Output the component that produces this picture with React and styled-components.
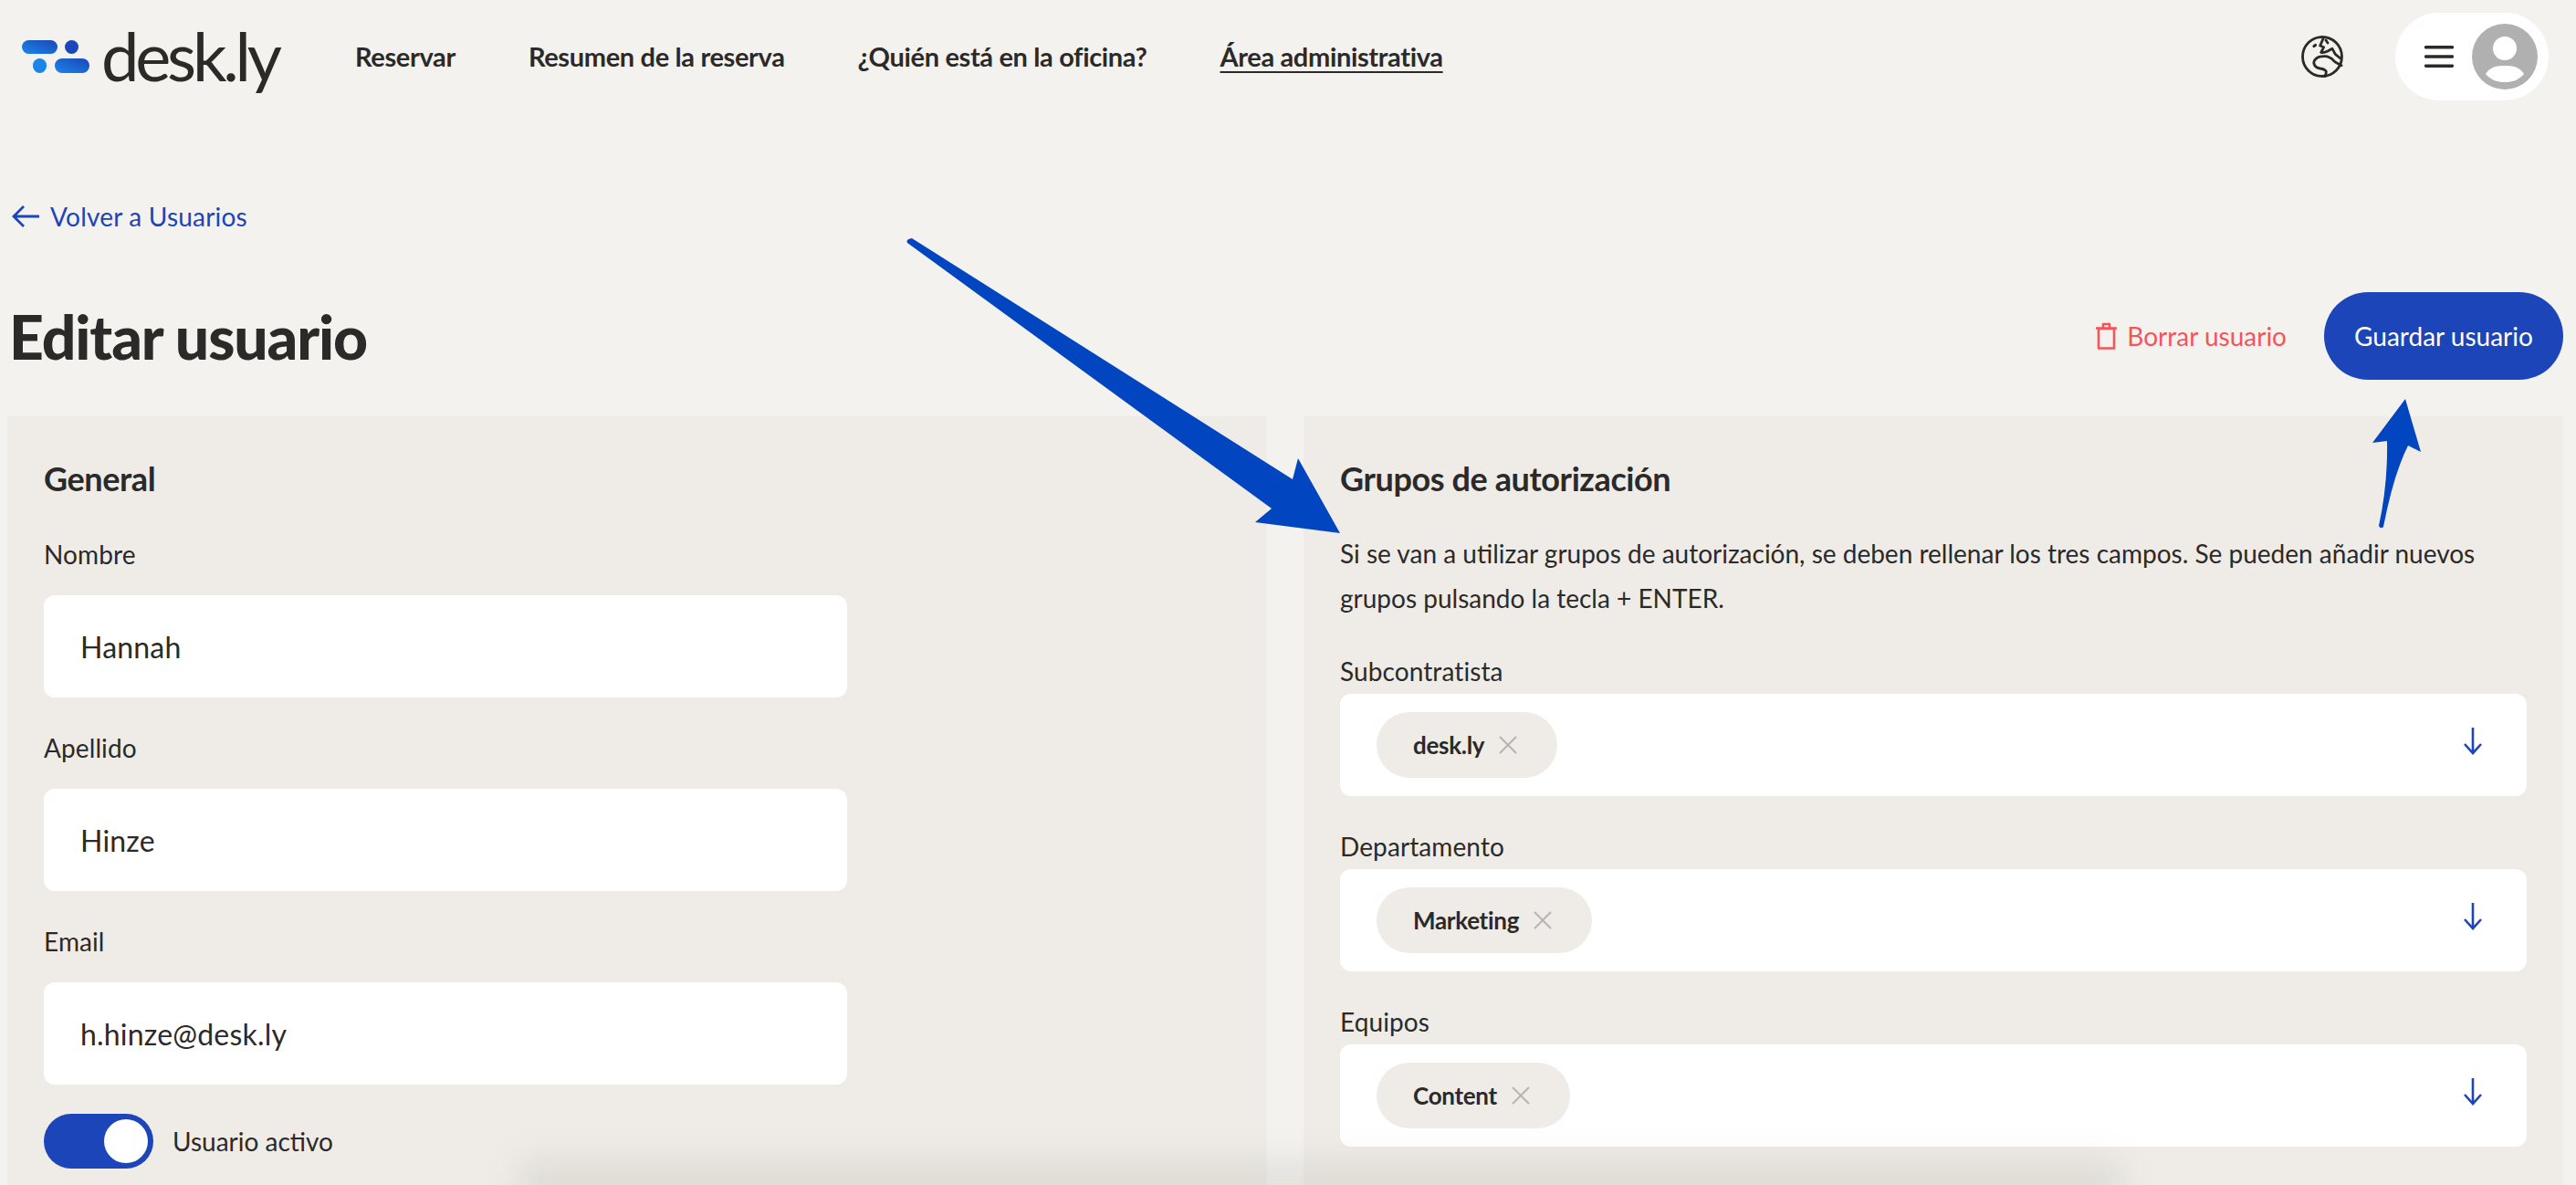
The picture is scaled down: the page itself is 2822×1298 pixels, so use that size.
import React from 'react';
import styled, { createGlobalStyle } from 'styled-components';

const ink = '#2b2a29';
const blue = '#1b45b8';

const GlobalStyle = createGlobalStyle`
  html, body {
    margin: 0;
    height: 100%;
    overflow: hidden;
    background: #f4f2ee;
  }
  body {
    font-family: Lato, "Liberation Sans", sans-serif;
    color: ${ink};
  }
`;

const Page = styled.div`
  position: relative;
  width: 2822px;
  height: 1298px;
  overflow: hidden;
`;

const Header = styled.header`
  display: flex;
  align-items: center;
  height: 124px;
  padding: 0 30px 0 24px;
  box-sizing: border-box;
`;

const Logo = styled.div`
  display: flex;
  align-items: center;
  gap: 13px;
  width: 365px;
`;

const LogoText = styled.span`
  font-size: 74px;
  line-height: 80px;
  letter-spacing: -4.2px;
  color: ${ink};
  margin-top: -2px;
`;

const Nav = styled.nav`
  display: flex;
  gap: 80px;
  flex: 1;
  margin-top: -2px;
`;

const NavLink = styled.a`
  font-size: 29px;
  font-weight: 700;
  letter-spacing: -0.35px;
  color: ${ink};
  text-decoration: ${(p) => (p.$active ? 'underline' : 'none')};
  text-underline-offset: 5px;
`;

const HeaderRight = styled.div`
  display: flex;
  align-items: center;
  gap: 57px;
`;

const UserPill = styled.div`
  display: flex;
  align-items: center;
  gap: 20px;
  width: 168px;
  height: 96px;
  box-sizing: border-box;
  padding-left: 32px;
  background: #fff;
  border-radius: 48px;
`;

const Content = styled.main`
  padding: 0 14px 0 8px;
`;

const BackLink = styled.a`
  display: flex;
  align-items: center;
  gap: 12px;
  height: 52px;
  margin: 87px 0 0 5px;
  font-size: 28px;
  letter-spacing: 0.2px;
  color: ${blue};
`;

const TitleRow = styled.div`
  display: flex;
  align-items: center;
  height: 96px;
  margin-top: 57px;
`;

const Title = styled.h1`
  flex: 1;
  margin: 0 0 0 2px;
  font-size: 66px;
  font-weight: 900;
  letter-spacing: -1.1px;
  color: ${ink};
`;

const DeleteLink = styled.a`
  display: flex;
  align-items: center;
  gap: 11px;
  margin-right: 41px;
  font-size: 28px;
  color: #f0565c;
`;

const SaveButton = styled.button`
  width: 262px;
  height: 96px;
  border: 0;
  border-radius: 48px;
  background: ${blue};
  color: #fff;
  font-family: inherit;
  font-size: 28px;
`;

const Columns = styled.div`
  display: grid;
  grid-template-columns: 1380px 1380px;
  gap: 40px;
  margin-top: 40px;
`;

const Panel = styled.section`
  height: 900px;
  box-sizing: border-box;
  padding: 40px;
  background: #efece7;
`;

const PanelTitle = styled.h2`
  margin: 0;
  height: 56px;
  font-size: 36px;
  line-height: 56px;
  font-weight: 700;
  letter-spacing: -0.4px;
  color: ${ink};
`;

const Field = styled.div`
  display: flex;
  flex-direction: column;
  height: ${(p) => p.$height}px;
`;

const Label = styled.label`
  margin-top: auto;
  margin-bottom: ${(p) => p.$gap}px;
  font-size: 28px;
  line-height: 50px;
  letter-spacing: 0.1px;
  color: ${ink};
`;

const TextInput = styled.div`
  display: flex;
  align-items: center;
  width: 880px;
  height: 112px;
  box-sizing: border-box;
  padding-left: 40px;
  background: #fff;
  border-radius: 12px;
  font-size: 32px;
  letter-spacing: 0.2px;
  color: ${ink};
`;

const ToggleRow = styled.div`
  display: flex;
  align-items: center;
  gap: 21px;
  margin-top: 32px;
  font-size: 28px;
`;

const Toggle = styled.div`
  display: flex;
  align-items: center;
  justify-content: flex-end;
  width: 120px;
  height: 60px;
  box-sizing: border-box;
  padding-right: 6px;
  background: ${blue};
  border-radius: 30px;
`;

const Knob = styled.div`
  width: 48px;
  height: 48px;
  background: #fff;
  border-radius: 50%;
`;

const Intro = styled.p`
  margin: 30px 0 0;
  max-width: 1270px;
  font-size: 28px;
  line-height: 49px;
  color: ${ink};
`;

const SelectBox = styled.div`
  display: flex;
  align-items: center;
  justify-content: space-between;
  height: 112px;
  box-sizing: border-box;
  padding: 0 48px 0 40px;
  background: #fff;
  border-radius: 12px;

  > svg {
    margin-bottom: 8px;
  }
`;

const Chip = styled.div`
  display: flex;
  align-items: center;
  gap: 16px;
  height: 72px;
  box-sizing: border-box;
  padding: 0 44px 0 40px;
  background: #efece7;
  border-radius: 36px;
  font-size: 26px;
  font-weight: 700;
  letter-spacing: -0.3px;
  color: ${ink};
`;

const BottomShade = styled.div`
  position: absolute;
  left: 570px;
  right: 500px;
  bottom: -60px;
  height: 88px;
  background: rgba(70, 62, 54, 0.09);
  filter: blur(18px);
  pointer-events: none;
`;

const ArrowLayer = styled.svg`
  position: absolute;
  left: 0;
  top: 0;
  pointer-events: none;
`;

const DeskLogo = () => (
  <svg width="74" height="36" viewBox="0 0 74 36">
    <defs>
      <linearGradient id="logoBlue" x1="0" y1="1" x2="1" y2="0">
        <stop offset="0" stopColor="#1c86e8" />
        <stop offset="1" stopColor="#1b45b8" />
      </linearGradient>
    </defs>
    <rect x="0" y="0" width="39" height="15" rx="7.5" fill="url(#logoBlue)" />
    <rect x="47" y="0" width="15" height="15" rx="7.5" fill="#1b45b8" />
    <rect x="12" y="20" width="15" height="16" rx="7.5" fill="#1c86e8" />
    <rect x="36" y="20" width="38" height="16" rx="8" fill="url(#logoBlue)" />
  </svg>
);

const GlobeIcon = () => (
  <svg width="46" height="46" viewBox="0 0 46 46" fill="none" stroke={ink} strokeWidth="2.8" strokeLinejoin="round" strokeLinecap="round">
    <circle cx="23" cy="23" r="21.5" />
    <path d="M24 3.5 L20.7 11 L24.7 12.7 L21.7 18.3 C24 19 27 18 29 17 L34 14.3 L37.3 20.3 L43 25" />
    <path d="M44 32.7 C41 31 38 30 35.7 27.7 C33 24.5 29 22.7 25.7 22.7 C22 22.7 19 23 17.3 24.3 C15 26 13.5 29 14 31 C15 34 18 35.5 20.7 36 C24 36.5 26.5 37.5 27.3 39.3 C27.6 41.5 26.5 43 25.7 45" />
    <path d="M27 5 L29 8" />
    <path d="M14 11.5 L15.5 10.5" strokeWidth="3.2" />
  </svg>
);

const MenuIcon = () => (
  <svg width="32" height="24" viewBox="0 0 32 24" fill={ink}>
    <rect width="32" height="3.6" rx="1.4" />
    <rect y="10.2" width="32" height="3.6" rx="1.4" />
    <rect y="20.4" width="32" height="3.6" rx="1.4" />
  </svg>
);

const AvatarIcon = () => (
  <svg width="72" height="72" viewBox="0 0 72 72">
    <circle cx="36" cy="36" r="36" fill="#b0b0b0" />
    <circle cx="36" cy="27" r="13" fill="#fff" />
    <path d="M15 55 C20 47 27 46 36 46 C45 46 52 47 57 55 C51 62 44 64 36 64 C28 64 21 62 15 55 Z" fill="#fff" />
  </svg>
);

const BackArrow = () => (
  <svg width="30" height="24" viewBox="0 0 30 24" fill="none" stroke={blue} strokeWidth="2.8">
    <path d="M30 12 H2 M13 1 L2 12 L13 23" />
  </svg>
);

const TrashIcon = () => (
  <svg width="23" height="30" viewBox="0 0 23 30" fill="none" stroke="#f0565c" strokeWidth="2.6" strokeLinejoin="round">
    <path d="M3 7 H20 V28.5 H3 Z M0 6.5 H23 M8 6 V2 H15 V6" />
  </svg>
);

const CloseIcon = () => (
  <svg width="20" height="20" viewBox="0 0 20 20" stroke="#b5b5b3" strokeWidth="2">
    <path d="M1 1 L19 19 M19 1 L1 19" />
  </svg>
);

const DownArrow = () => (
  <svg width="22" height="30" viewBox="0 0 22 30" fill="none" stroke={blue} strokeWidth="2.6">
    <path d="M11 0 V28 M2 18 L11 28 L20 18" />
  </svg>
);

// annotation arrows sitting over the screenshot, in page coordinates
const Annotations = () => (
  <ArrowLayer width="2822" height="1298" viewBox="0 0 2822 1298">
    <path
      d="M999 261 L1416 525 L1422 502 L1468 584 L1375 572 L1393 557 L994 266 Q992 262 999 261 Z"
      fill="#0245c0"
    />
    <path
      d="M2635 437 L2652 495 L2638 488 Q2622 520 2611 577 Q2608 580 2606 576 Q2616 530 2615 483 L2599 485 Z"
      fill="#0245c0"
    />
  </ArrowLayer>
);

const people = [
  { label: 'Nombre', value: 'Hannah' },
  { label: 'Apellido', value: 'Hinze' },
  { label: 'Email', value: 'h.hinze@desk.ly' },
];

const groups = [
  { label: 'Subcontratista', chip: 'desk.ly' },
  { label: 'Departamento', chip: 'Marketing' },
  { label: 'Equipos', chip: 'Content' },
];

export default function App() {
  return (
    <Page>
      <GlobalStyle />
      <Header>
        <Logo>
          <DeskLogo />
          <LogoText>desk.ly</LogoText>
        </Logo>
        <Nav>
          <NavLink>Reservar</NavLink>
          <NavLink>Resumen de la reserva</NavLink>
          <NavLink>¿Quién está en la oficina?</NavLink>
          <NavLink $active>Área administrativa</NavLink>
        </Nav>
        <HeaderRight>
          <GlobeIcon />
          <UserPill>
            <MenuIcon />
            <AvatarIcon />
          </UserPill>
        </HeaderRight>
      </Header>
      <Content>
        <BackLink>
          <BackArrow />
          Volver a Usuarios
        </BackLink>
        <TitleRow>
          <Title>Editar usuario</Title>
          <DeleteLink>
            <TrashIcon />
            Borrar usuario
          </DeleteLink>
          <SaveButton>Guardar usuario</SaveButton>
        </TitleRow>
        <Columns>
          <Panel>
            <PanelTitle>General</PanelTitle>
            {people.map((f) => (
              <Field key={f.label} $height={212}>
                <Label $gap={20}>{f.label}</Label>
                <TextInput>{f.value}</TextInput>
              </Field>
            ))}
            <ToggleRow>
              <Toggle>
                <Knob />
              </Toggle>
              Usuario activo
            </ToggleRow>
          </Panel>
          <Panel>
            <PanelTitle>Grupos de autorización</PanelTitle>
            <Intro>
              Si se van a utilizar grupos de autorización, se deben rellenar los tres campos. Se pueden añadir nuevos
              grupos pulsando la tecla + ENTER.
            </Intro>
            {groups.map((g) => (
              <Field key={g.label} $height={192}>
                <Label $gap={0}>{g.label}</Label>
                <SelectBox>
                  <Chip>
                    {g.chip}
                    <CloseIcon />
                  </Chip>
                  <DownArrow />
                </SelectBox>
              </Field>
            ))}
          </Panel>
        </Columns>
      </Content>
      <BottomShade />
      <Annotations />
    </Page>
  );
}
